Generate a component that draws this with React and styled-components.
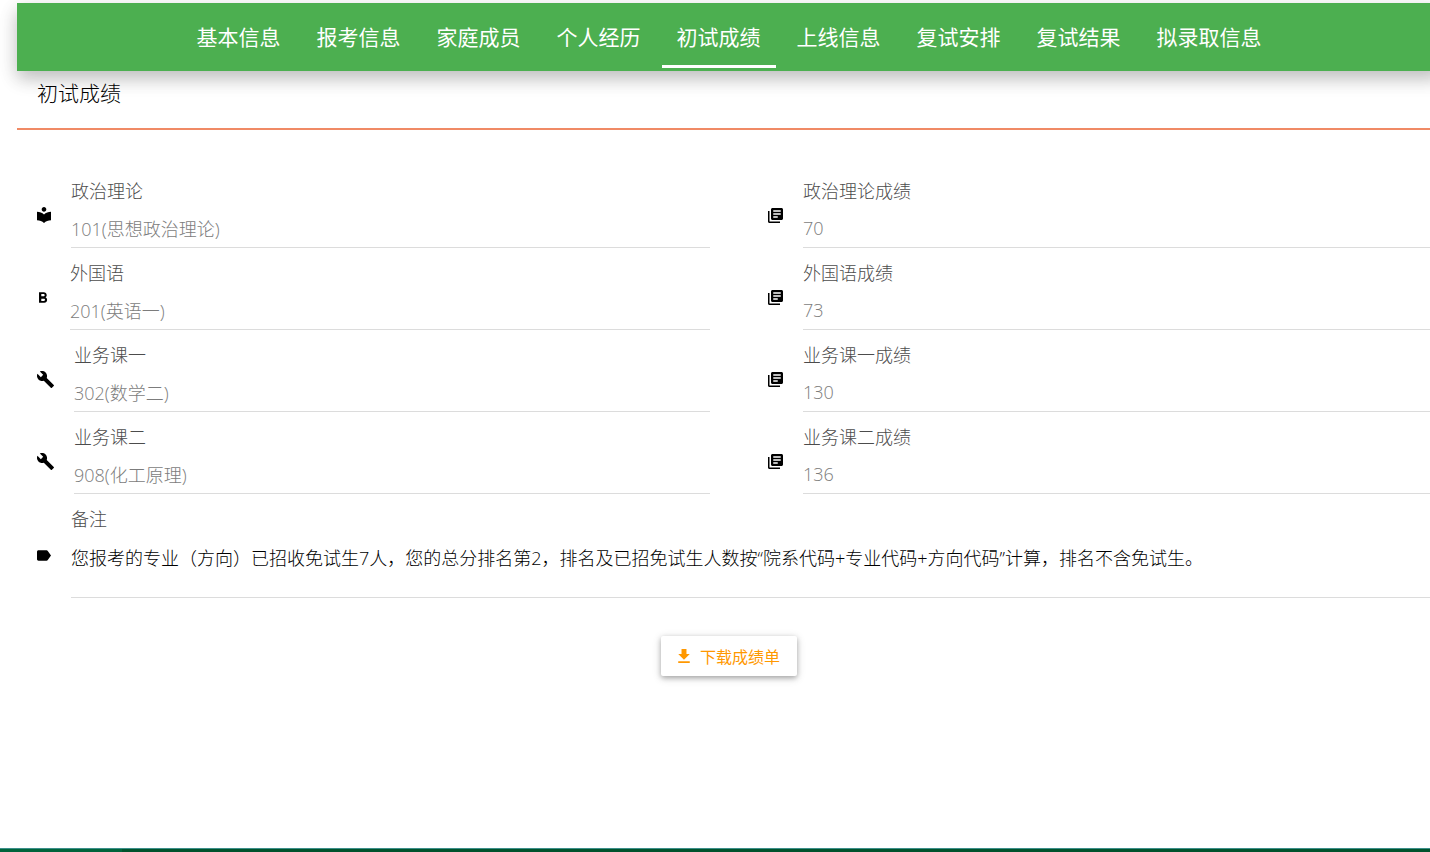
import { useState } from "react";
import styled, { createGlobalStyle } from "styled-components";

const GlobalStyle = createGlobalStyle`
  * {
    box-sizing: border-box;
  }

  body {
    margin: 0;
    overflow-x: hidden;
    background: #fff;
    color: #000;
    font-family: "Open Sans", "Noto Sans CJK SC", sans-serif;
    font-weight: 300;
  }
`;

const Page = styled.div`
  display: flex;
  flex-direction: column;
  min-height: 100vh;
  overflow: hidden;
`;

const Content = styled.main`
  flex: 1;
  padding: 3px 0 24px 17px;
  margin-right: -11px;
`;

const Nav = styled.nav`
  display: flex;
  justify-content: center;
  gap: 6px;
  height: 68px;
  padding-bottom: 3px;
  background: #4caf50;
  box-shadow: 0 8px 17px 0 rgba(0, 0, 0, 0.2), 0 6px 20px 0 rgba(0, 0, 0, 0.08);
`;

const Tab = styled.a`
  display: flex;
  align-items: center;
  padding: 5px 15px 0;
  border-bottom: 3px solid ${(props) => (props.$active ? "#fff" : "transparent")};
  color: #fff;
  font-size: 21px;
  font-weight: 400;
  line-height: 32px;
  white-space: nowrap;
  text-decoration: none;
`;

const Title = styled.h1`
  margin: 0;
  padding: 6px 20px 19px;
  border-bottom: 2px solid #f08a65;
  font-size: 21px;
  font-weight: 300;
  line-height: 32px;
`;

const Form = styled.form`
  padding: 36px 0 0 20px;
`;

const Grid = styled.div`
  display: grid;
  grid-template-columns: 1fr 1fr;
  column-gap: 58px;
`;

const FieldRow = styled.div`
  display: flex;
  align-items: flex-end;
  gap: 20px;
`;

const IconBox = styled.span`
  display: flex;
  align-items: center;
  flex-shrink: 0;
  height: 18px;
  margin-bottom: ${(props) => (props.$tall ? "34px" : "24px")};
`;

const FieldBody = styled.div`
  display: flex;
  flex: 1;
  flex-direction: column;
  min-width: 0;
`;

const Label = styled.label`
  padding-top: 12px;
  color: #4c4c4c;
  font-size: 18px;
  line-height: 26px;
`;

const Input = styled.input`
  width: 100%;
  height: 44px;
  padding: 4px 0 0;
  border: 0;
  border-bottom: 1px solid #dcdcdc;
  outline: none;
  background: transparent;
  color: #7c7c7c;
  font: inherit;
  font-size: 18px;
`;

const Note = styled.textarea`
  width: 100%;
  height: 66px;
  padding: 13px 0 0;
  border: 0;
  border-bottom: 1px solid #dcdcdc;
  outline: none;
  resize: none;
  overflow: hidden;
  background: transparent;
  color: #000;
  font: inherit;
  font-size: 18px;
  line-height: 26px;
`;

const Actions = styled.div`
  display: flex;
  justify-content: center;
  padding-top: 38px;
`;

const DownloadButton = styled.button`
  display: flex;
  align-items: center;
  gap: 10px;
  height: 40px;
  padding: 0 17px;
  border: 0;
  border-radius: 2px;
  background: #fff;
  box-shadow: 0 2px 5px 0 rgba(0, 0, 0, 0.26), 0 2px 10px 0 rgba(0, 0, 0, 0.16);
  color: #ff9800;
  font: inherit;
  font-size: 16px;
  font-weight: 400;
  cursor: pointer;
`;

const Footer = styled.footer`
  height: 4px;
  border-top: 1px solid #3c8f8a;
  background: linear-gradient(90deg, #00643c 122px, #00532d 122px);
`;

const icons = {
  reader: {
    width: 14,
    height: 16,
    viewBox: "3 2 18 20.55",
    path: "M12 11.55C9.64 9.35 6.48 8 3 8v11c3.48 0 6.64 1.35 9 3.55 2.36-2.19 5.52-3.55 9-3.55V8c-3.48 0-6.64 1.35-9 3.55zM12 8c1.66 0 3-1.34 3-3s-1.34-3-3-3-3 1.34-3 3 1.34 3 3 3z",
  },
  bold: {
    width: 13,
    height: 11,
    viewBox: "4.3 4 17.3 14",
    path: "M15.6 10.79c.97-.67 1.65-1.77 1.65-2.79 0-2.26-1.75-4-4-4H7v14h7.04c2.09 0 3.71-1.7 3.71-3.79 0-1.52-.86-2.82-2.15-3.42zM10 6.5h3c.83 0 1.5.67 1.5 1.5s-.67 1.5-1.5 1.5h-3v-3zm3.5 9H10v-3h3.5c.83 0 1.5.67 1.5 1.5s-.67 1.5-1.5 1.5z",
  },
  wrench: {
    width: 17,
    height: 17,
    viewBox: "1 1 22 22",
    path: "M22.7 19l-9.1-9.1c.9-2.3.4-5-1.5-6.9-2-2-5-2.4-7.4-1.3L9 6 6 9 1.6 4.7C.4 7.1.9 10.1 2.9 12.1c1.9 1.9 4.6 2.4 6.9 1.5l9.1 9.1c.4.4 1 .4 1.4 0l2.3-2.3c.5-.4.5-1.1.1-1.4z",
  },
  books: {
    width: 15,
    height: 15,
    viewBox: "2 2 20 20",
    path: "M4 6H2v14c0 1.1.9 2 2 2h14v-2H4V6zm16-4H8c-1.1 0-2 .9-2 2v12c0 1.1.9 2 2 2h12c1.1 0 2-.9 2-2V4c0-1.1-.9-2-2-2zm-1 9H9V9h10v2zm-4 4H9v-2h6v2zm4-8H9V5h10v2z",
  },
  tag: {
    width: 14,
    height: 11,
    viewBox: "3 5 19 14",
    path: "M17.63 5.84C17.27 5.33 16.67 5 16 5L5 5.01C3.9 5.01 3 5.9 3 7v10c0 1.1.9 1.99 2 1.99L16 19c.67 0 1.27-.33 1.63-.84L22 12l-4.37-6.16z",
  },
  download: {
    width: 12,
    height: 14,
    viewBox: "5 3 14 17",
    path: "M19 9h-4V3H9v6H5l7 7 7-7zM5 18v2h14v-2H5z",
  },
};

const tabs = [
  "基本信息",
  "报考信息",
  "家庭成员",
  "个人经历",
  "初试成绩",
  "上线信息",
  "复试安排",
  "复试结果",
  "拟录取信息",
];

const fields = [
  { id: "zzll", icon: "reader", label: "政治理论", value: "101(思想政治理论)" },
  { id: "zzllcj", icon: "books", label: "政治理论成绩", value: "70" },
  { id: "wgy", icon: "bold", label: "外国语", value: "201(英语一)" },
  { id: "wgycj", icon: "books", label: "外国语成绩", value: "73" },
  { id: "ywk1", icon: "wrench", label: "业务课一", value: "302(数学二)" },
  { id: "ywk1cj", icon: "books", label: "业务课一成绩", value: "130" },
  { id: "ywk2", icon: "wrench", label: "业务课二", value: "908(化工原理)" },
  { id: "ywk2cj", icon: "books", label: "业务课二成绩", value: "136" },
];

const note =
  "您报考的专业（方向）已招收免试生7人，您的总分排名第2，排名及已招免试生人数按“院系代码+专业代码+方向代码”计算，排名不含免试生。";

function Icon({ name }) {
  const { path, ...size } = icons[name];
  return (
    <svg {...size} fill="currentColor" aria-hidden="true">
      <path d={path} />
    </svg>
  );
}

function Field({ id, icon, label, value }) {
  return (
    <FieldRow>
      <IconBox>
        <Icon name={icon} />
      </IconBox>
      <FieldBody>
        <Label htmlFor={id}>{label}</Label>
        <Input id={id} type="text" value={value} disabled />
      </FieldBody>
    </FieldRow>
  );
}

export default function App() {
  const [active, setActive] = useState("初试成绩");

  return (
    <Page>
      <GlobalStyle />
      <Content>
        <Nav>
          {tabs.map((tab) => (
            <Tab
              key={tab}
              href="#"
              $active={tab === active}
              onClick={() => setActive(tab)}
            >
              {tab}
            </Tab>
          ))}
        </Nav>
        <Title>初试成绩</Title>
        <Form>
          <Grid>
            {fields.map((field) => (
              <Field key={field.id} {...field} />
            ))}
          </Grid>
          <FieldRow>
            <IconBox $tall>
              <Icon name="tag" />
            </IconBox>
            <FieldBody>
              <Label htmlFor="bz">备注</Label>
              <Note id="bz" value={note} readOnly />
            </FieldBody>
          </FieldRow>
        </Form>
        <Actions>
          <DownloadButton type="button">
            <Icon name="download" />
            下载成绩单
          </DownloadButton>
        </Actions>
      </Content>
      <Footer />
    </Page>
  );
}
